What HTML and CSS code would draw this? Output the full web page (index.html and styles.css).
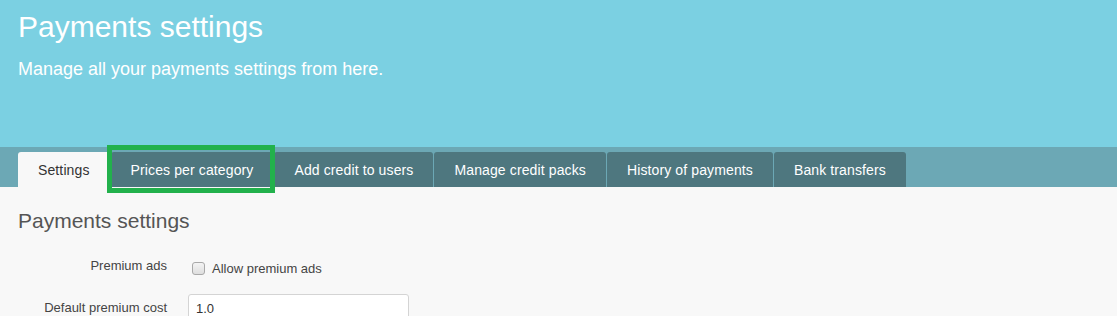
FILE: index.html
```html
<!DOCTYPE html>
<html lang="en">
<head>
<meta charset="utf-8">
<title>Payments settings</title>
<link rel="stylesheet" href="styles.css">
</head>
<body>
  <header class="hero">
    <h1 class="hero-title">Payments settings</h1>
    <p class="hero-sub">Manage all your payments settings from here.</p>
  </header>
  <nav class="tabbar">
    <ul class="tabs">
      <li class="tab tab-active">Settings</li>
      <li class="tab">Prices per category</li>
      <li class="tab">Add credit to users</li>
      <li class="tab">Manage credit packs</li>
      <li class="tab">History of payments</li>
      <li class="tab">Bank transfers</li>
    </ul>
    <div class="highlight"></div>
  </nav>
  <main class="content">
    <h2 class="section-title">Payments settings</h2>
    <form class="form">
      <div class="row row-first">
        <label class="row-label">Premium ads</label>
        <div class="row-control check-control">
          <input type="checkbox" class="checkbox" id="allow">
          <label class="check-label" for="allow">Allow premium ads</label>
        </div>
      </div>
      <div class="row row-second">
        <label class="row-label row-label-input" for="cost">Default premium cost</label>
        <div class="row-control">
          <input type="text" class="text-input" id="cost" value="1.0">
        </div>
      </div>
    </form>
  </main>
</body>
</html>
```

FILE: styles.css
```css
* { box-sizing: border-box; }

html, body {
  margin: 0;
  padding: 0;
  background: #f8f8f8;
  font-family: "Liberation Sans", Arial, Helvetica, sans-serif;
  overflow: hidden;
}

.hero {
  background: #7bd0e2;
  height: 147px;
  padding: 10px 18px 0;
  color: #ffffff;
}

.hero-title {
  margin: 0;
  font-size: 30px;
  line-height: 33px;
  font-weight: normal;
}

.hero-sub {
  margin: 16px 0 0;
  font-size: 18px;
  line-height: 20px;
}

.tabbar {
  position: relative;
  background: #6ca8b5;
  height: 40px;
  padding: 5px 0 0 18px;
}

.tabs {
  list-style: none;
  margin: 0;
  padding: 0;
  display: flex;
  gap: 1px;
}

.tab {
  height: 35px;
  line-height: 36px;
  padding: 0 20px;
  font-size: 14px;
  letter-spacing: 0.12px;
  color: #ffffff;
  background: #4e777f;
  border-radius: 3px 3px 0 0;
  white-space: nowrap;
  overflow: hidden;
}

.tab-active {
  background: #f8f8f8;
  color: #333333;
}

.highlight {
  position: absolute;
  left: 107px;
  top: -2px;
  width: 168px;
  height: 48px;
  border: 5px solid #22b14c;
  pointer-events: none;
}

.content {
  padding: 22px 18px 0;
}

.section-title {
  margin: 0;
  font-size: 21px;
  line-height: 23px;
  font-weight: normal;
  color: #555555;
}

.form {
  margin-top: 25px;
}

.row {
  display: flex;
  align-items: flex-start;
  gap: 21px;
}

.row-second {
  margin-top: 16px;
}

.row-label {
  width: 149px;
  text-align: right;
  font-size: 13px;
  line-height: 18px;
  color: #444444;
}

.row-label-input {
  line-height: 28px;
}

.check-control {
  display: flex;
  align-items: flex-start;
}

.checkbox {
  appearance: none;
  -webkit-appearance: none;
  width: 13px;
  height: 13px;
  margin: 5px 0 0 4px;
  border: 1px solid #a9a9a9;
  border-radius: 3px;
  background: linear-gradient(#f4f4f4, #dedede);
}

.check-label {
  margin-left: 7px;
  padding-top: 3px;
  font-size: 13px;
  line-height: 18px;
  color: #444444;
}

.text-input {
  display: block;
  width: 221px;
  height: 28px;
  padding: 0 7px;
  margin: 0;
  border: 1px solid #d4d4d4;
  border-radius: 3px;
  background: #ffffff;
  font-family: "Liberation Sans", Arial, Helvetica, sans-serif;
  font-size: 13px;
  color: #333333;
}
```
